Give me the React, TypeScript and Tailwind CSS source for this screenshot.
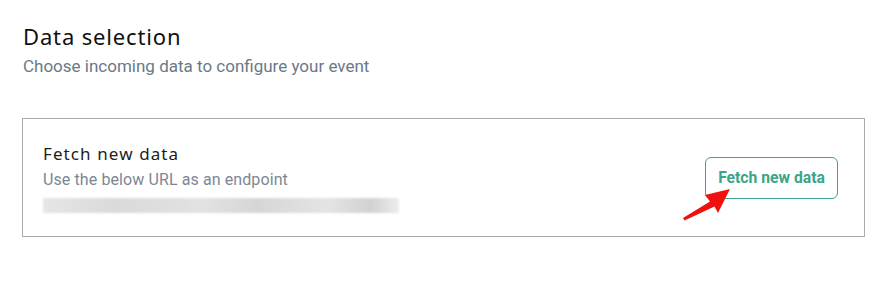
export default function App() {
  return (
    <div className="w-[878px] h-[304px] bg-white pl-[22px] pr-[13px] pt-[22px] font-['Roboto',sans-serif]">
      <h1 className="text-[22px] leading-[28px] text-[#111] font-['Noto_Sans',sans-serif] pl-px tracking-[0.85px]">
        Data selection
      </h1>
      <p className="mt-[6px] text-[17px] leading-[20px] text-[#6b7888] pl-px">
        Choose incoming data to configure your event
      </p>

      <div className="relative mt-[42px] h-[119px] border border-[#a9adb2] flex items-center justify-between pl-[20px] pr-[26px]">
        <div className="flex flex-col">
          <p className="text-[17px] leading-[22px] text-[#1d1d1d] font-['Noto_Sans',sans-serif] tracking-[1.1px]">
            Fetch new data
          </p>
          <p className="mt-[6px] text-[16px] leading-[18px] text-[#7b8794] tracking-[0.1px]">
            Use the below URL as an endpoint
          </p>
          <div className="mt-[9px] h-[15px] w-[356px] bg-[linear-gradient(90deg,#e6e6e6_0%,#dadada_20%,#e2e2e2_45%,#d6d6d6_60%,#e4e4e4_80%,#d2d2d2_92%,#ededed_100%)] blur-[1px]" />
        </div>

        <button className="h-[42px] w-[133px] rounded-[6px] border border-[#3da58d] text-[15.7px] font-bold text-[#3aa58b]">
          Fetch new data
        </button>

        <svg
          className="absolute left-[660px] top-[68px]"
          width="50"
          height="36"
          viewBox="0 0 50 36"
        >
          <path d="M0 31 L27 14.5 L22 8 L47 2 L35 26 L31.5 19.5 L1.5 33.5 Z" fill="#f01010" />
        </svg>
      </div>
    </div>
  );
}
